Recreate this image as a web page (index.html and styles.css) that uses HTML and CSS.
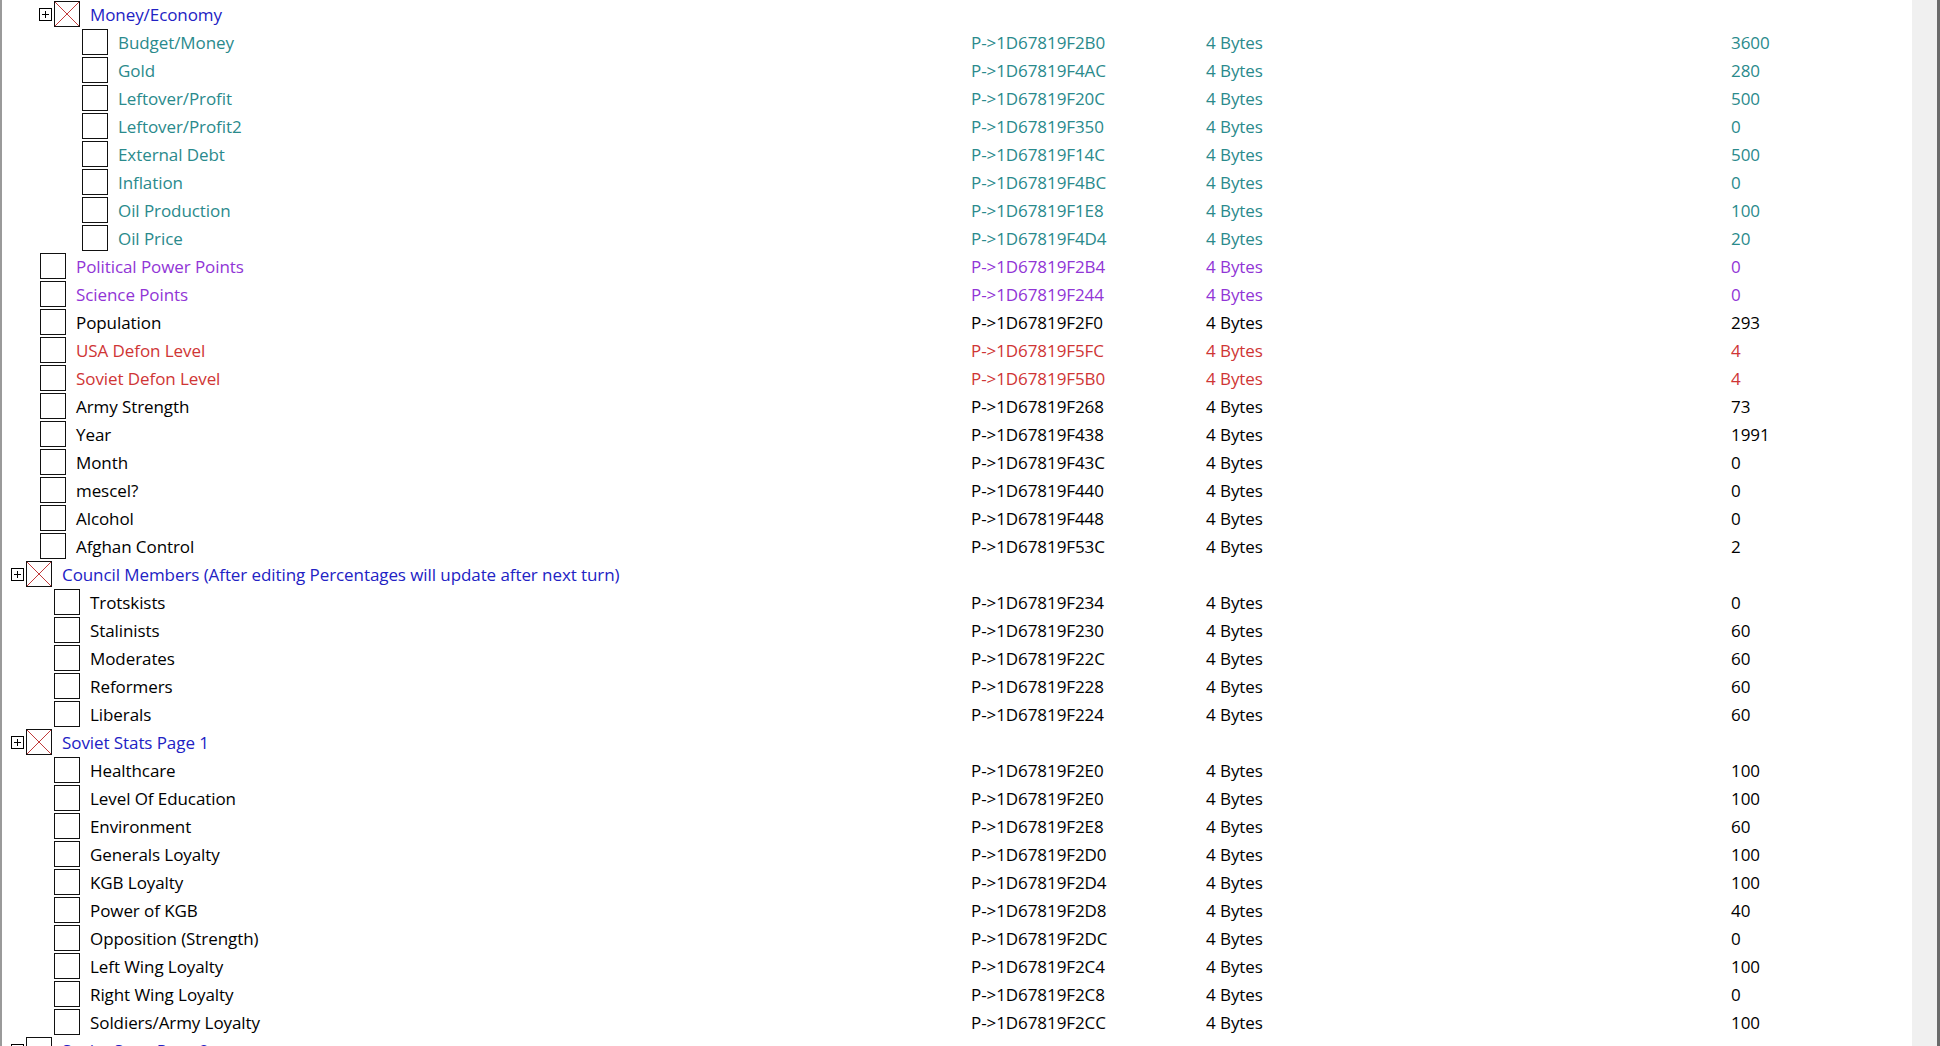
FILE: index.html
```html
<!DOCTYPE html>
<html lang="en">
<head>
    <meta charset="UTF-8">
    <title>Address list</title>
    <link rel="stylesheet" href="styles.css">
</head>
<body>

<div class="window">
    <div class="list">

        <!-- Money/Economy -->
        <div class="row group">
            <div class="name lv-g1">
                <svg class="expander" width="13" height="13" viewBox="0 0 13 13"><rect x="0.5" y="0.5" width="12" height="12" fill="#fff" stroke="#000"/><path d="M3 6.5h7M6.5 3v7" stroke="#000"/></svg>
                <span class="check"><svg width="24" height="24" viewBox="0 0 24 24"><path d="M0 0L24 24M24 0L0 24" stroke="#c03a3a" stroke-width="1"/></svg></span>
                <span class="label">Money/Economy</span>
            </div>
        </div>
        <div class="row teal"><div class="name lv-i3"><span class="check"></span><span class="label">Budget/Money</span></div><div class="addr">P-&gt;1D67819F2B0</div><div class="type">4 Bytes</div><div class="val">3600</div></div>
        <div class="row teal"><div class="name lv-i3"><span class="check"></span><span class="label">Gold</span></div><div class="addr">P-&gt;1D67819F4AC</div><div class="type">4 Bytes</div><div class="val">280</div></div>
        <div class="row teal"><div class="name lv-i3"><span class="check"></span><span class="label">Leftover/Profit</span></div><div class="addr">P-&gt;1D67819F20C</div><div class="type">4 Bytes</div><div class="val">500</div></div>
        <div class="row teal"><div class="name lv-i3"><span class="check"></span><span class="label">Leftover/Profit2</span></div><div class="addr">P-&gt;1D67819F350</div><div class="type">4 Bytes</div><div class="val">0</div></div>
        <div class="row teal"><div class="name lv-i3"><span class="check"></span><span class="label">External Debt</span></div><div class="addr">P-&gt;1D67819F14C</div><div class="type">4 Bytes</div><div class="val">500</div></div>
        <div class="row teal"><div class="name lv-i3"><span class="check"></span><span class="label">Inflation</span></div><div class="addr">P-&gt;1D67819F4BC</div><div class="type">4 Bytes</div><div class="val">0</div></div>
        <div class="row teal"><div class="name lv-i3"><span class="check"></span><span class="label">Oil Production</span></div><div class="addr">P-&gt;1D67819F1E8</div><div class="type">4 Bytes</div><div class="val">100</div></div>
        <div class="row teal"><div class="name lv-i3"><span class="check"></span><span class="label">Oil Price</span></div><div class="addr">P-&gt;1D67819F4D4</div><div class="type">4 Bytes</div><div class="val">20</div></div>

        <div class="row purple"><div class="name lv-i1"><span class="check"></span><span class="label">Political Power Points</span></div><div class="addr">P-&gt;1D67819F2B4</div><div class="type">4 Bytes</div><div class="val">0</div></div>
        <div class="row purple"><div class="name lv-i1"><span class="check"></span><span class="label">Science Points</span></div><div class="addr">P-&gt;1D67819F244</div><div class="type">4 Bytes</div><div class="val">0</div></div>
        <div class="row"><div class="name lv-i1"><span class="check"></span><span class="label">Population</span></div><div class="addr">P-&gt;1D67819F2F0</div><div class="type">4 Bytes</div><div class="val">293</div></div>
        <div class="row red"><div class="name lv-i1"><span class="check"></span><span class="label">USA Defon Level</span></div><div class="addr">P-&gt;1D67819F5FC</div><div class="type">4 Bytes</div><div class="val">4</div></div>
        <div class="row red"><div class="name lv-i1"><span class="check"></span><span class="label">Soviet Defon Level</span></div><div class="addr">P-&gt;1D67819F5B0</div><div class="type">4 Bytes</div><div class="val">4</div></div>
        <div class="row"><div class="name lv-i1"><span class="check"></span><span class="label">Army Strength</span></div><div class="addr">P-&gt;1D67819F268</div><div class="type">4 Bytes</div><div class="val">73</div></div>
        <div class="row"><div class="name lv-i1"><span class="check"></span><span class="label">Year</span></div><div class="addr">P-&gt;1D67819F438</div><div class="type">4 Bytes</div><div class="val">1991</div></div>
        <div class="row"><div class="name lv-i1"><span class="check"></span><span class="label">Month</span></div><div class="addr">P-&gt;1D67819F43C</div><div class="type">4 Bytes</div><div class="val">0</div></div>
        <div class="row"><div class="name lv-i1"><span class="check"></span><span class="label">mescel?</span></div><div class="addr">P-&gt;1D67819F440</div><div class="type">4 Bytes</div><div class="val">0</div></div>
        <div class="row"><div class="name lv-i1"><span class="check"></span><span class="label">Alcohol</span></div><div class="addr">P-&gt;1D67819F448</div><div class="type">4 Bytes</div><div class="val">0</div></div>
        <div class="row"><div class="name lv-i1"><span class="check"></span><span class="label">Afghan Control</span></div><div class="addr">P-&gt;1D67819F53C</div><div class="type">4 Bytes</div><div class="val">2</div></div>

        <!-- Council Members -->
        <div class="row group">
            <div class="name lv-g0">
                <svg class="expander" width="13" height="13" viewBox="0 0 13 13"><rect x="0.5" y="0.5" width="12" height="12" fill="#fff" stroke="#000"/><path d="M3 6.5h7M6.5 3v7" stroke="#000"/></svg>
                <span class="check"><svg width="24" height="24" viewBox="0 0 24 24"><path d="M0 0L24 24M24 0L0 24" stroke="#c03a3a" stroke-width="1"/></svg></span>
                <span class="label">Council Members (After editing Percentages will update after next turn)</span>
            </div>
        </div>
        <div class="row"><div class="name lv-i2"><span class="check"></span><span class="label">Trotskists</span></div><div class="addr">P-&gt;1D67819F234</div><div class="type">4 Bytes</div><div class="val">0</div></div>
        <div class="row"><div class="name lv-i2"><span class="check"></span><span class="label">Stalinists</span></div><div class="addr">P-&gt;1D67819F230</div><div class="type">4 Bytes</div><div class="val">60</div></div>
        <div class="row"><div class="name lv-i2"><span class="check"></span><span class="label">Moderates</span></div><div class="addr">P-&gt;1D67819F22C</div><div class="type">4 Bytes</div><div class="val">60</div></div>
        <div class="row"><div class="name lv-i2"><span class="check"></span><span class="label">Reformers</span></div><div class="addr">P-&gt;1D67819F228</div><div class="type">4 Bytes</div><div class="val">60</div></div>
        <div class="row"><div class="name lv-i2"><span class="check"></span><span class="label">Liberals</span></div><div class="addr">P-&gt;1D67819F224</div><div class="type">4 Bytes</div><div class="val">60</div></div>

        <!-- Soviet Stats Page 1 -->
        <div class="row group">
            <div class="name lv-g0">
                <svg class="expander" width="13" height="13" viewBox="0 0 13 13"><rect x="0.5" y="0.5" width="12" height="12" fill="#fff" stroke="#000"/><path d="M3 6.5h7M6.5 3v7" stroke="#000"/></svg>
                <span class="check"><svg width="24" height="24" viewBox="0 0 24 24"><path d="M0 0L24 24M24 0L0 24" stroke="#c03a3a" stroke-width="1"/></svg></span>
                <span class="label">Soviet Stats Page 1</span>
            </div>
        </div>
        <div class="row"><div class="name lv-i2"><span class="check"></span><span class="label">Healthcare</span></div><div class="addr">P-&gt;1D67819F2E0</div><div class="type">4 Bytes</div><div class="val">100</div></div>
        <div class="row"><div class="name lv-i2"><span class="check"></span><span class="label">Level Of Education</span></div><div class="addr">P-&gt;1D67819F2E0</div><div class="type">4 Bytes</div><div class="val">100</div></div>
        <div class="row"><div class="name lv-i2"><span class="check"></span><span class="label">Environment</span></div><div class="addr">P-&gt;1D67819F2E8</div><div class="type">4 Bytes</div><div class="val">60</div></div>
        <div class="row"><div class="name lv-i2"><span class="check"></span><span class="label">Generals Loyalty</span></div><div class="addr">P-&gt;1D67819F2D0</div><div class="type">4 Bytes</div><div class="val">100</div></div>
        <div class="row"><div class="name lv-i2"><span class="check"></span><span class="label">KGB Loyalty</span></div><div class="addr">P-&gt;1D67819F2D4</div><div class="type">4 Bytes</div><div class="val">100</div></div>
        <div class="row"><div class="name lv-i2"><span class="check"></span><span class="label">Power of KGB</span></div><div class="addr">P-&gt;1D67819F2D8</div><div class="type">4 Bytes</div><div class="val">40</div></div>
        <div class="row"><div class="name lv-i2"><span class="check"></span><span class="label">Opposition (Strength)</span></div><div class="addr">P-&gt;1D67819F2DC</div><div class="type">4 Bytes</div><div class="val">0</div></div>
        <div class="row"><div class="name lv-i2"><span class="check"></span><span class="label">Left Wing Loyalty</span></div><div class="addr">P-&gt;1D67819F2C4</div><div class="type">4 Bytes</div><div class="val">100</div></div>
        <div class="row"><div class="name lv-i2"><span class="check"></span><span class="label">Right Wing Loyalty</span></div><div class="addr">P-&gt;1D67819F2C8</div><div class="type">4 Bytes</div><div class="val">0</div></div>
        <div class="row"><div class="name lv-i2"><span class="check"></span><span class="label">Soldiers/Army Loyalty</span></div><div class="addr">P-&gt;1D67819F2CC</div><div class="type">4 Bytes</div><div class="val">100</div></div>

        <!-- Soviet Stats Page 2 (cut off by the window) -->
        <div class="row group">
            <div class="name lv-g0">
                <svg class="expander" width="13" height="13" viewBox="0 0 13 13"><rect x="0.5" y="0.5" width="12" height="12" fill="#fff" stroke="#000"/><path d="M3 6.5h7M6.5 3v7" stroke="#000"/></svg>
                <span class="check"></span>
                <span class="label">Soviet Stats Page 2</span>
            </div>
        </div>

    </div>
    <div class="scrollbar"></div>
</div>

</body>
</html>
```

FILE: styles.css
```css
html, body {
    margin: 0;
    padding: 0;
    height: 100%;
    overflow: hidden;
    background: #fff;
}

body {
    font-family: "Open Sans", "Noto Sans", sans-serif;
    font-size: 17px;
    letter-spacing: -0.08px;
    color: #000;
}

.window {
    display: flex;
    height: 100vh;
}

.list {
    flex: 1;
    border-left: 2px solid #9a9a9a;
    overflow: hidden;
}

.scrollbar {
    width: 25px;
    background: #f0f0f0;
    border-right: 3px solid #6a6a6a;
}

.row {
    display: flex;
    align-items: center;
    height: 28px;
    white-space: nowrap;
}

.name {
    display: flex;
    align-items: center;
    width: 969px;
    box-sizing: border-box;
}

.lv-g0 { padding-left: 9px; }
.lv-g1 { padding-left: 37px; }
.lv-i1 { padding-left: 38px; }
.lv-i2 { padding-left: 52px; }
.lv-i3 { padding-left: 80px; }

.expander {
    flex: none;
    margin-right: 2px;
}

.check {
    flex: none;
    display: block;
    width: 24px;
    height: 24px;
    border: 1px solid #111;
    background: #fff;
    margin-right: 10px;
}

.check svg {
    display: block;
}

.addr {
    width: 235px;
}

.type {
    width: 525px;
}

.val {
    width: 150px;
}

.group { color: #2222c4; }
.teal { color: #2a8a8c; }
.purple { color: #9135d6; }
.red { color: #cf3535; }
```
